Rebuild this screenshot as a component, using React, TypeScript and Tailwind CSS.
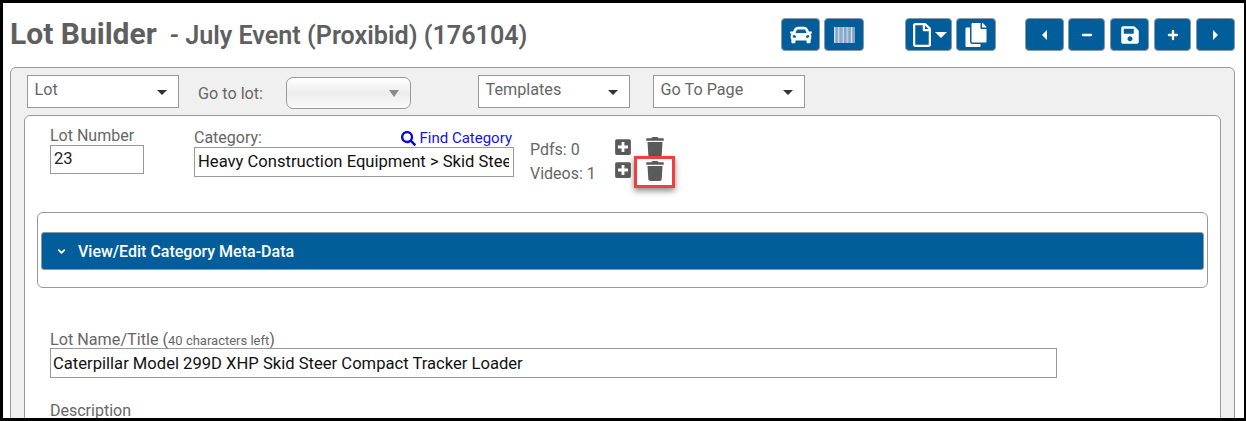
import { ReactNode } from "react";
import { FaCar, FaCopy, FaPlusSquare, FaRegFile, FaSave, FaSearch, FaTrash } from "react-icons/fa";
import { ChevronDown, Minus, Plus } from "lucide-react";

function ToolButton({ className, children }: { className: string; children: ReactNode }) {
  return (
    <button className={`flex h-[33px] items-center justify-center rounded-[4px] border border-[#8c9aa6] bg-[#025e9b] text-white ${className}`}>
      {children}
    </button>
  );
}

function Caret({ className }: { className?: string }) {
  return <span className={`h-0 w-0 border-x-[5px] border-t-[5px] border-x-transparent border-t-[#333333] ${className ?? ""}`} />;
}

function SelectBox({ label }: { label: string }) {
  return (
    <div className="flex h-[33px] w-[152px] items-center justify-between border border-[#999999] bg-white pr-[11px] pl-[6.5px] pb-[3px] text-[16.2px] text-[#666666]">
      <span>{label}</span>
      <Caret className="mt-[4px]" />
    </div>
  );
}

const stripes = ["#d8d8f0", "#f0e0f0", "#c8e0e8", "#e8d8e8", "#d0d0e8", "#e0f0f0", "#c8c8e0", "#f0e8f0", "#d0e0f0", "#e0d0e8", "#c8d8e0", "#e8e8f0", "#d0d0e0", "#d8e8f0", "#e0d8e8", "#c8d0e0"];

export default function App() {
  return (
    <div className="h-[421px] w-[1246px] overflow-hidden border-t-[3px] border-r-[2px] border-b-[3px] border-l-[3px] border-black bg-white font-['Roboto',sans-serif]">
      <div className="flex h-[64px] pt-[15px] pr-[9px] pl-[7px]">
        <div className="flex items-baseline pt-[1px] text-[#5f5f5f]">
          <h1 className="text-[30px] leading-[30px] font-bold">Lot Builder</h1>
          <span className="ml-[13px] text-[25.15px] leading-[30px] font-semibold">- July Event (Proxibid) (176104)</span>
        </div>
        <div className="ml-auto flex">
          <ToolButton className="w-[39px]"><FaCar size={22} /></ToolButton>
          <ToolButton className="ml-[4px] w-[40px]">
            <svg width="21" height="16" viewBox="0 0 21 16">
              {stripes.map((c, i) => (
                <rect key={i} x={i * 1.31} y="0" width="1" height="16" fill={c} />
              ))}
            </svg>
          </ToolButton>
          <ToolButton className="ml-[41px] w-[47px]">
            <FaRegFile size={24} />
            <span className="ml-[1px] h-0 w-0 border-x-[6px] border-t-[6px] border-x-transparent border-t-white" />
          </ToolButton>
          <ToolButton className="ml-[4px] w-[40px]"><FaCopy size={24} /></ToolButton>
          <ToolButton className="ml-[29px] w-[39px]"><span className="h-0 w-0 border-y-[5px] border-r-[5px] border-y-transparent border-r-white" /></ToolButton>
          <ToolButton className="ml-[4px] w-[37px]"><Minus size={14} strokeWidth={4} /></ToolButton>
          <ToolButton className="ml-[5px] w-[39px]"><FaSave size={20} /></ToolButton>
          <ToolButton className="ml-[5px] w-[37px]"><Plus size={14} strokeWidth={4} /></ToolButton>
          <ToolButton className="ml-[5px] w-[39px]"><span className="h-0 w-0 border-y-[5px] border-l-[5px] border-y-transparent border-l-white" /></ToolButton>
        </div>
      </div>

      <div className="mr-[9px] ml-[7px] h-[400px] rounded-t-[6px] border border-[#999999] bg-[#f0f0f0] px-[13px] pt-[7px]">
        <div className="flex h-[40px] items-start pl-[3px]">
          <SelectBox label="Lot" />
          <span className="mt-[9px] ml-[19px] text-[16.2px] leading-[20px] text-[#666666]">Go to lot:</span>
          <div className="mt-[2px] ml-[23px] flex h-[32px] w-[125px] items-center justify-end rounded-[7px] border border-[#999999] bg-gradient-to-b from-[#ffffff] via-[#ececec] to-[#fafafa] pr-[11px]">
            <span className="h-0 w-0 border-x-[5px] border-t-[7px] border-x-transparent border-t-[#8a8a8a]" />
          </div>
          <div className="ml-[67px]"><SelectBox label="Templates" /></div>
          <div className="ml-[23px]"><SelectBox label="Go To Page" /></div>
        </div>

        <div className="h-[400px] rounded-t-[6px] border border-[#999999] bg-white px-[12px]">
          <div className="relative flex h-[96px] pt-[11px] pl-[13px]">
            <div className="w-[144px]">
              <label className="block text-[16px] leading-[18px] text-[#666666]">Lot Number</label>
              <input readOnly value="23" className="block h-[29px] w-[94px] border border-[#999999] pl-[3px] pb-[2px] text-[16.6px] text-[#222222] outline-none" />
            </div>
            <div className="w-[320px]">
              <div className="flex h-[20px] items-center justify-between pr-[2px]">
                <span className="text-[16px] leading-[17px] text-[#666666]">Category:</span>
                <span className="flex items-center gap-[4px] pt-[2px] text-[15px] leading-[17px] text-[#1414e6]">
                  <FaSearch size={15} color="#0a0ad0" />
                  Find Category
                </span>
              </div>
              <input readOnly value="Heavy Construction Equipment > Skid Steer Loaders" className="block h-[30px] w-[320px] border border-[#999999] pr-[4px] pl-[3px] pb-[1px] text-[16.6px] text-[#111111] outline-none" />
            </div>
            <div className="mt-[11px] ml-[16px] w-[84px] text-[16px] leading-[24px] text-[#666666]">
              <div>Pdfs: 0</div>
              <div>Videos: 1</div>
            </div>
            <div className="mt-[10px] flex flex-col">
              <div className="flex h-[24px] items-start">
                <div className="mt-[1px] text-[#5a5a5a]"><FaPlusSquare size={18} /></div>
                <div className="ml-[13px] text-[#5a5a5a]"><FaTrash size={20} /></div>
              </div>
              <div className="flex h-[24px] items-start">
                <div className="text-[#5a5a5a]"><FaPlusSquare size={18} /></div>
                <div className="ml-[13px] text-[#5a5a5a]"><FaTrash size={20} /></div>
              </div>
            </div>
            <div className="absolute top-[40px] left-[597px] h-[32px] w-[41px] border-[3px] border-[#ef3f3f] shadow-[0_3px_6px_rgba(0,0,0,0.45)]" />
          </div>

          <div className="h-[76px] rounded-[6px] border border-[#999999] px-[3px] pt-[19px]">
            <div className="flex h-[38px] items-center rounded-[3px] border border-[#8c9aa6] bg-[#025e9b] pt-[1px] pl-[14px] text-[16px] font-medium text-white">
              <ChevronDown size={11} strokeWidth={4} />
              <span className="ml-[11px]">View/Edit Category Meta-Data</span>
            </div>
          </div>

          <div className="pt-[45px] pl-[13px]">
            <label className="block text-[16.2px] leading-[14px] text-[#666666]">
              Lot Name/Title (<span className="text-[13px]">40 characters left</span>)
            </label>
            <input readOnly value="Caterpillar Model 299D XHP Skid Steer Compact Tracker Loader" className="block h-[30px] w-[1007px] border border-[#999999] pl-[2px] text-[16.6px] text-[#111111] outline-none" />
            <div className="mt-[24px] text-[16px] leading-[18px] text-[#666666]">Description</div>
          </div>
        </div>
      </div>
    </div>
  );
}
